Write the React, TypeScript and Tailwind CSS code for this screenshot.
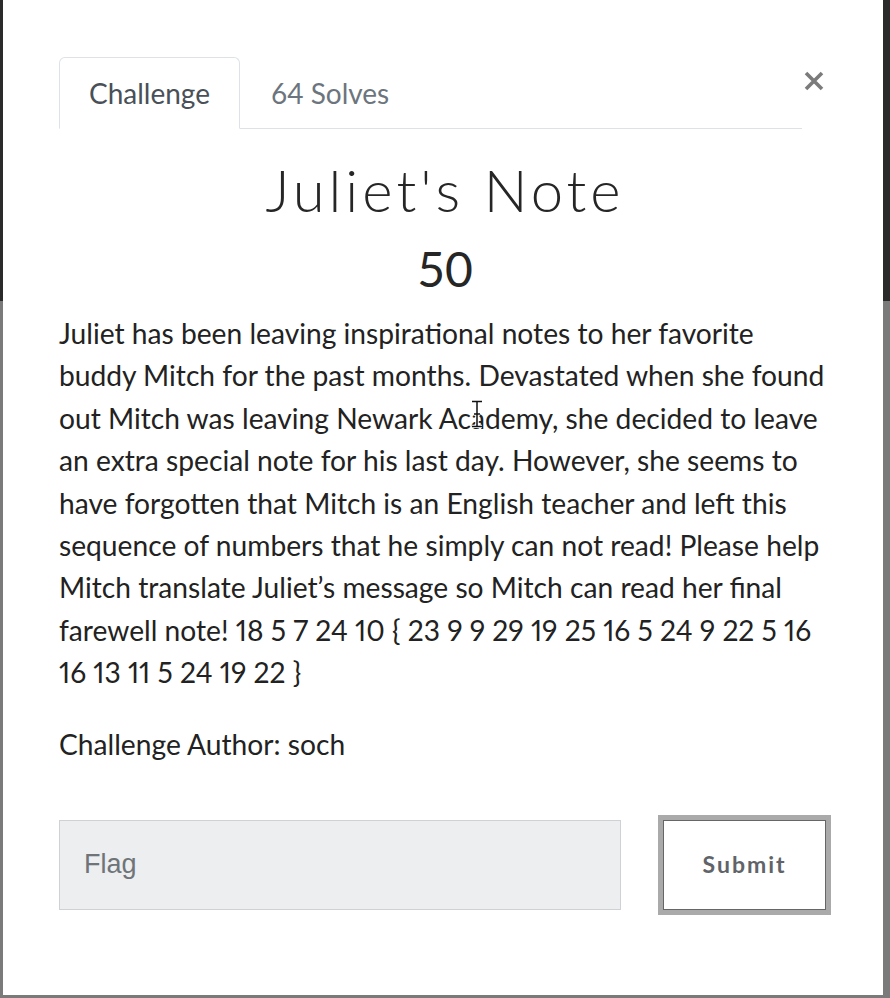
import React from "react";

const lines = [
  "Juliet has been leaving inspirational notes to her favorite",
  "buddy Mitch for the past months. Devastated when she found",
  "out Mitch was leaving Newark Academy, she decided to leave",
  "an extra special note for his last day. However, she seems to",
  "have forgotten that Mitch is an English teacher and left this",
  "sequence of numbers that he simply can not read! Please help",
  "Mitch translate Juliet\u2019s message so Mitch can read her final",
  "farewell note! 18 5 7 24 10 { 23 9 9 29 19 25 16 5 24 9 22 5 16",
  "16 13 11 5 24 19 22 }",
];

export default function App() {
  return (
    <div className="relative w-[890px] h-[998px] bg-[linear-gradient(#2a2a2a_0_301px,#7a7a7a_301px)] font-['Lato','Noto_Sans',sans-serif]">
      {/* modal */}
      <div className="ml-[3px] w-[880px] h-[995px] bg-white pl-[56px] pr-[52px] pt-[57px]">
        {/* tabs */}
        <div className="flex items-start">
          <ul className="flex flex-1 border-b border-[#dee2e6]">
            <li className="-mb-px px-[29px] pt-[19px] pb-[18px] border border-[#dee2e6] border-b-white rounded-t-[6px] bg-white text-[28px] leading-[33px] text-[#495057]">
              Challenge
            </li>
            <li className="-mb-px px-[30px] pt-[19px] pb-[18px] border border-transparent text-[28px] leading-[33px] text-[#6c757d]">
              64 Solves
            </li>
          </ul>
          <button className="w-[29px] h-[48px] flex items-center justify-start">
            <svg width="20" height="20" viewBox="0 0 20 20" className="ml-[2px]">
              <path d="M2 2 L18 18 M18 2 L2 18" stroke="#7b7b7b" strokeWidth="3.6" strokeLinecap="butt" />
            </svg>
          </button>
        </div>

        {/* heading */}
        <div className="text-center text-[#262626] mt-[28px]">
          <h2 className="font-light text-[58px] leading-[66px] tracking-[4px]">Juliet's Note</h2>
          <h3 className="text-[48px] leading-[58px] mt-[17px]">50</h3>
        </div>

        {/* body */}
        <p className="mt-[14px] text-[28.2px] leading-[42.4px] text-[#222] proportional-nums">
          {lines.map((l) => (
            <span key={l} className="block whitespace-nowrap">{l}</span>
          ))}
        </p>
        <p className="mt-[29px] text-[28.2px] leading-[42px] text-[#222]">Challenge Author: soch</p>

        {/* form */}
        <div className="mt-[50px] flex items-center">
          <input
            type="text"
            placeholder="Flag"
            className="w-[563px] h-[90px] bg-[#eceeef] border border-[#cfd2d4] px-[24px] text-[27px] font-['Liberation_Sans',Arial,sans-serif] text-[#333] placeholder:text-[#6f7478] outline-none"
          />
          <button className="ml-[37px] w-[173px] h-[100px] border-[5px] border-[#aaaaaa] bg-white p-0">
            <div className="w-full h-full border border-[#666] flex items-center justify-center">
              <span className="font-bold text-[23px] tracking-[2px] text-[#606468]">Submit</span>
            </div>
          </button>
        </div>
      </div>

      {/* mouse text cursor */}
      <svg className="absolute left-[470px] top-[400px]" width="14" height="28" viewBox="0 0 14 28">
        <path d="M2 1.5 H12 M7 1.5 V26.5 M2 26.5 H12 M4 14 H10" stroke="#fff" strokeWidth="3.5" fill="none" />
        <path d="M2 1.5 H12 M7 1.5 V26.5 M2 26.5 H12 M4 14 H10" stroke="#111" strokeWidth="1.5" fill="none" />
      </svg>
    </div>
  );
}
